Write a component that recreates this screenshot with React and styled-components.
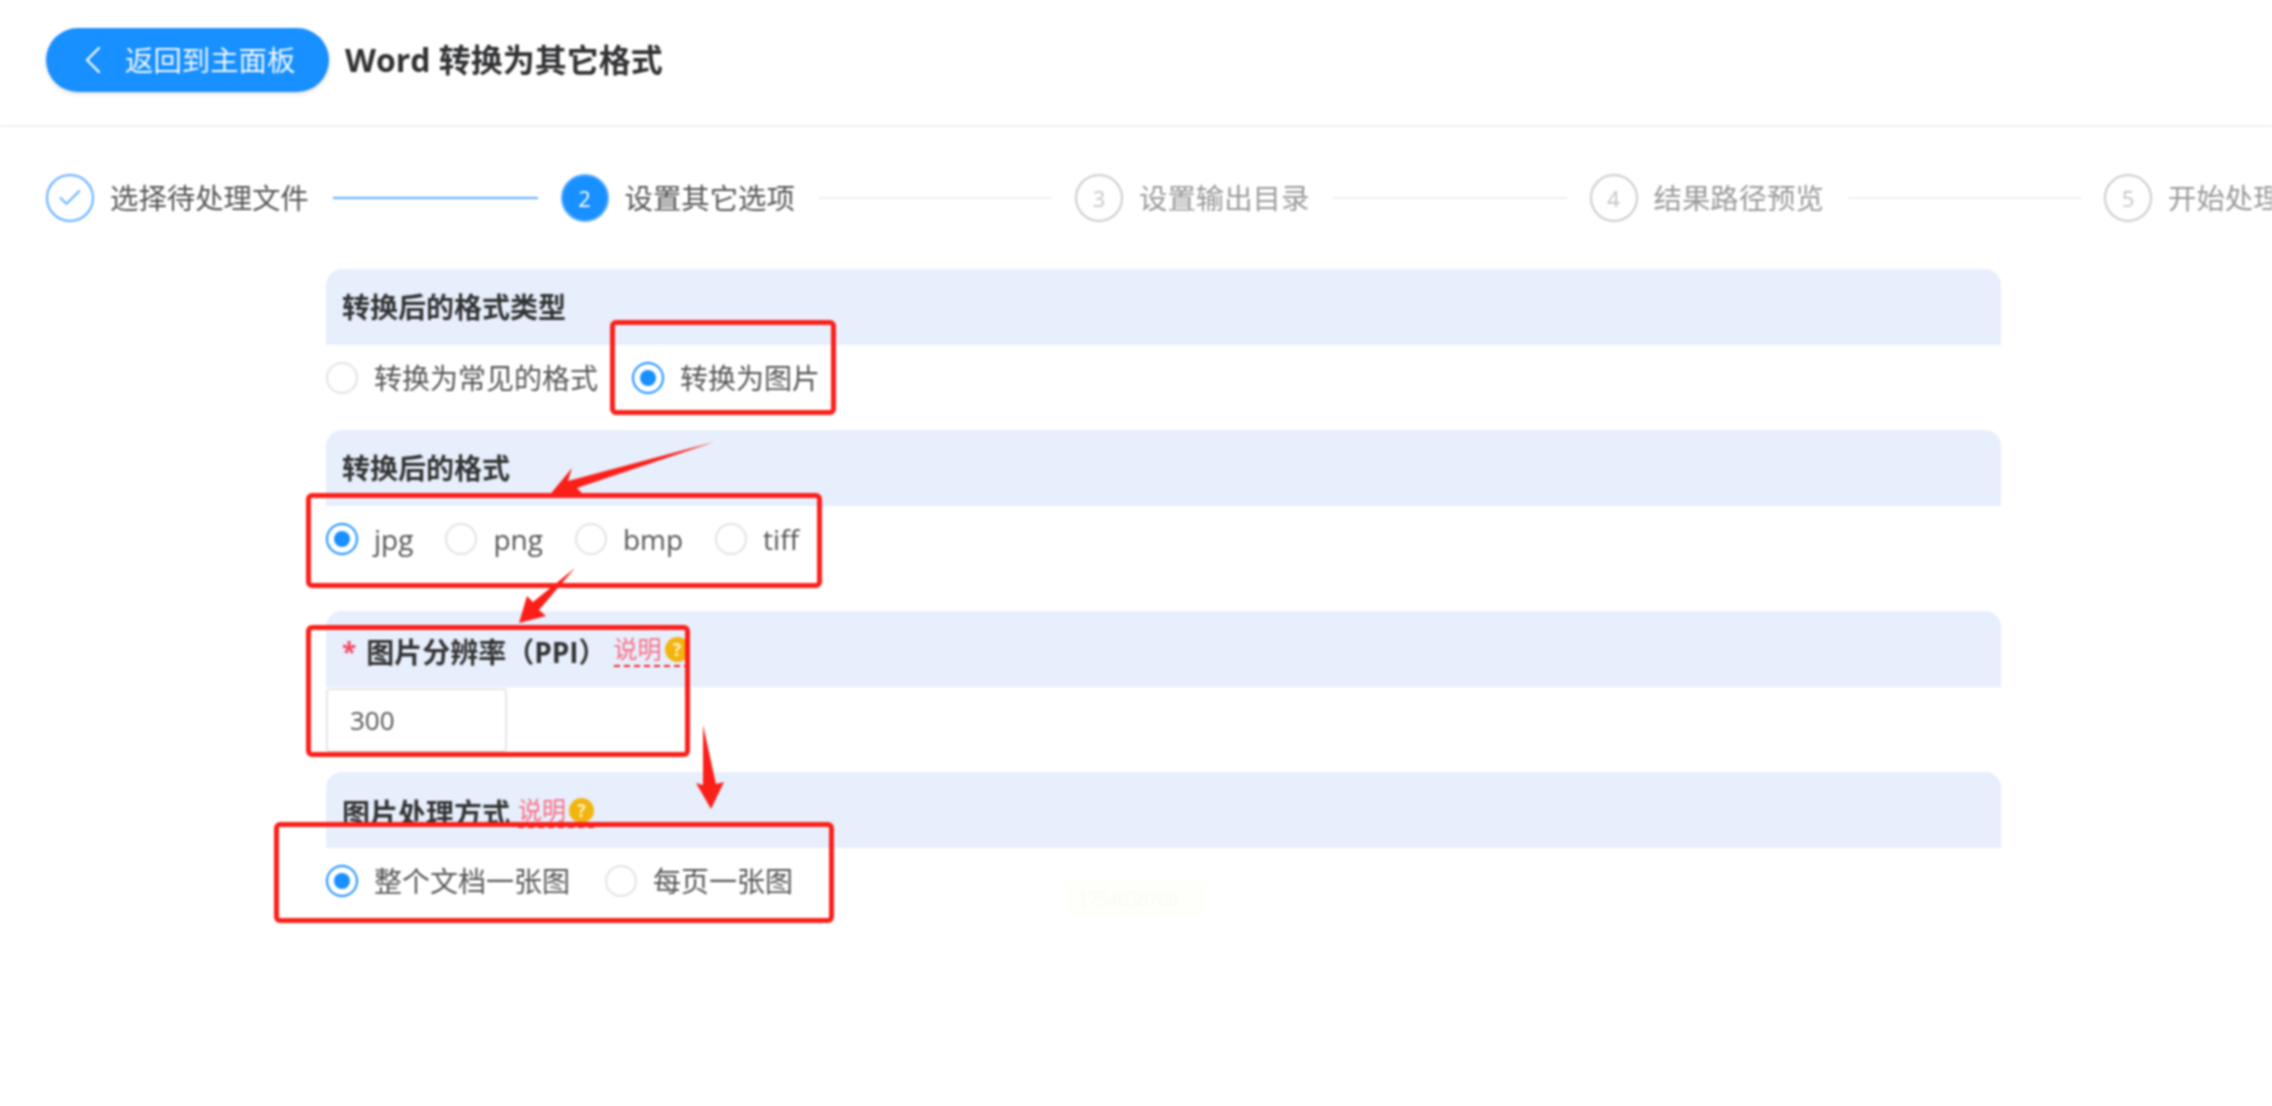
import React from 'react'
import styled, { createGlobalStyle } from 'styled-components'
import { Check, ChevronLeft } from 'lucide-react'

const GlobalStyle = createGlobalStyle`
  html, body {
    margin: 0;
    padding: 0;
    background: #fff;
  }

  body {
    font-family: "Open Sans", "Noto Sans CJK SC", sans-serif;
    color: #444;
    overflow: hidden;
  }
`

const Page = styled.div`
  position: relative;
  width: 2272px;
  height: 1106px;
  overflow: hidden;
  background: #fff;
  filter: blur(0.8px);
`

const Header = styled.header`
  display: flex;
  align-items: center;
  gap: 16px;
  height: 127px;
  padding: 0 46px 5px;
  box-sizing: border-box;
  border-bottom: 2px solid #f0f0f0;
`

const BackButton = styled.button`
  display: flex;
  align-items: center;
  width: 283px;
  height: 64px;
  padding: 0 0 0 23px;
  border: none;
  border-radius: 32px;
  background: #1890ff;
  box-shadow: 0 2px 4px rgba(0, 0, 0, 0.12);
  color: #f2f8ff;
  font: inherit;
  font-size: 28.4px;
  line-height: 1;

  svg {
    margin-right: 8px;
    flex: none;
  }
`

const Title = styled.h1`
  margin: 0;
  color: #303133;
  font-size: 32px;
  font-weight: 700;
  line-height: 1;
`

const Steps = styled.ol`
  display: flex;
  align-items: center;
  width: 2600px;
  margin: 0;
  padding: 47px 0 0 46px;
  list-style: none;
`

const Step = styled.li`
  display: flex;
  flex: none;
  align-items: center;
  width: 514.5px;
  padding-right: 23px;
  box-sizing: border-box;
`

const StepCircle = styled.span`
  display: flex;
  flex: none;
  align-items: center;
  justify-content: center;
  width: 48px;
  height: 48px;
  box-sizing: border-box;
  border: 2px solid ${(p) => (p.$state === 'wait' ? '#ccc' : '#5eaeff')};
  border-radius: 50%;
  background: ${(p) => (p.$state === 'active' ? '#1890ff' : '#fff')};
  color: ${(p) => (p.$state === 'active' ? '#fff' : p.$state === 'wait' ? '#c4c4c4' : '#5eaeff')};
  font-size: 22px;
`

const StepLabel = styled.span`
  flex: none;
  margin: 0 24px 0 16px;
  color: ${(p) => (p.$state === 'wait' ? '#999' : '#555')};
  font-size: 28.4px;
  line-height: 1;
`

const StepLine = styled.span`
  flex: 1;
  height: 2px;
  background: ${(p) => (p.$done ? '#5eaeff' : '#efefef')};
`

const Form = styled.main`
  width: 1675px;
  margin: 47px 0 0 326px;
`

const Section = styled.section`
  display: flex;
  flex-direction: column;
`

const SectionHead = styled.div`
  display: flex;
  align-items: center;
  height: 76px;
  padding: ${(p) => (p.$low ? '5px' : '0')} 16px 0;
  box-sizing: border-box;
  border-radius: 16px 16px 0 0;
  background: #e7eefc;
  color: #333;
  font-size: 28px;
  font-weight: 700;
  line-height: 1;
`

const Required = styled.span`
  margin-right: 10px;
  color: #f5455c;
  font-size: 26px;
`

const Hint = styled.span`
  display: inline-flex;
  align-items: center;
  gap: 3px;
  margin-left: ${(p) => p.$offset}px;
  padding-bottom: 3px;
  border-bottom: 2px dashed #f5222d;
  color: #f86d82;
  font-size: 24px;
  font-weight: 400;
`

const HintBadge = styled.span`
  display: flex;
  align-items: center;
  justify-content: center;
  width: 25px;
  height: 25px;
  border-radius: 50%;
  background: #f2b50f;
  color: #fff3c4;
  font-size: 17px;
  font-weight: 700;
`

const RadioRow = styled.div`
  display: flex;
  align-items: center;
  gap: ${(p) => p.$gap}px;
  height: ${(p) => p.$height}px;
  padding-bottom: ${(p) => p.$pad}px;
  box-sizing: border-box;
`

const RadioItem = styled.label`
  display: flex;
  align-items: center;
  gap: 16px;
  color: #555;
  font-size: 28px;
  line-height: 1;
`

const RadioMark = styled.span`
  display: flex;
  flex: none;
  align-items: center;
  justify-content: center;
  width: 32px;
  height: 32px;
  box-sizing: border-box;
  border: 2px solid ${(p) => (p.$on ? '#1890ff' : '#e2e2e2')};
  border-radius: 50%;
  background: #fff;

  &::after {
    content: '';
    display: ${(p) => (p.$on ? 'block' : 'none')};
    width: 16px;
    height: 16px;
    border-radius: 50%;
    background: #1890ff;
  }
`

const InputRow = styled.div`
  height: 85px;
  padding-top: 1px;
  box-sizing: border-box;
`

const NumberInput = styled.div`
  display: flex;
  align-items: center;
  width: 181px;
  height: 64px;
  padding-left: 22px;
  box-sizing: border-box;
  border: 2px solid #e6e6e6;
  border-radius: 4px;
  color: #555;
  font-size: 26px;
`

const Mark = styled.div`
  position: absolute;
  left: ${(p) => p.$x}px;
  top: ${(p) => p.$y}px;
  width: ${(p) => p.$w}px;
  height: ${(p) => p.$h}px;
  box-sizing: border-box;
  border: 5px solid #fb1f1a;
  border-radius: 6px;
`

const Arrows = styled.svg`
  position: absolute;
  left: 0;
  top: 0;
  pointer-events: none;
`

const Watermark = styled.div`
  position: absolute;
  left: 1067px;
  top: 881px;
  width: 138px;
  height: 36px;
  padding-left: 11px;
  box-sizing: border-box;
  background: #fefefa;
  color: #fafaf3;
  font-family: "Liberation Serif", serif;
  font-size: 20px;
  line-height: 36px;
`

const stepList = [
  { label: '选择待处理文件', state: 'done' },
  { label: '设置其它选项', state: 'active', num: 2 },
  { label: '设置输出目录', state: 'wait', num: 3 },
  { label: '结果路径预览', state: 'wait', num: 4 },
  { label: '开始处理', state: 'wait', num: 5 },
]

const marks = [
  { x: 610, y: 320, w: 226, h: 95 },
  { x: 306, y: 493, w: 516, h: 95 },
  { x: 306, y: 625, w: 384, h: 132 },
  { x: 274, y: 822, w: 560, h: 101 },
]

function Radio({ on, children }) {
  return (
    <RadioItem>
      <RadioMark $on={on} />
      {children}
    </RadioItem>
  )
}

function HintLink({ offset }) {
  return (
    <Hint $offset={offset}>
      说明
      <HintBadge>?</HintBadge>
    </Hint>
  )
}

function App() {
  return (
    <Page>
      <GlobalStyle />
      <Header>
        <BackButton type="button">
          <ChevronLeft size={48} strokeWidth={1.2} />
          返回到主面板
        </BackButton>
        <Title>Word 转换为其它格式</Title>
      </Header>

      <Steps>
        {stepList.map((step, i) => (
          <Step key={step.label}>
            <StepCircle $state={step.state}>
              {step.state === 'done' ? <Check size={28} strokeWidth={1.6} /> : step.num}
            </StepCircle>
            <StepLabel $state={step.state}>{step.label}</StepLabel>
            {i < stepList.length - 1 && <StepLine $done={step.state === 'done'} />}
          </Step>
        ))}
      </Steps>

      <Form>
        <Section>
          <SectionHead>转换后的格式类型</SectionHead>
          <RadioRow $gap={34} $height={85} $pad={19}>
            <Radio>转换为常见的格式</Radio>
            <Radio on>转换为图片</Radio>
          </RadioRow>
        </Section>
        <Section>
          <SectionHead>转换后的格式</SectionHead>
          <RadioRow $gap={32} $height={105} $pad={39}>
            <Radio on>jpg</Radio>
            <Radio>png</Radio>
            <Radio>bmp</Radio>
            <Radio>tiff</Radio>
          </RadioRow>
        </Section>
        <Section>
          <SectionHead $low>
            <Required>*</Required>
            图片分辨率（PPI）
            <HintLink offset={7} />
          </SectionHead>
          <InputRow>
            <NumberInput>300</NumberInput>
          </InputRow>
        </Section>
        <Section>
          <SectionHead $low>
            图片处理方式
            <HintLink offset={8} />
          </SectionHead>
          <RadioRow $gap={35} $height={66}>
            <Radio on>整个文档一张图</Radio>
            <Radio>每页一张图</Radio>
          </RadioRow>
        </Section>
      </Form>

      <Watermark>1754638766</Watermark>

      {marks.map((m) => (
        <Mark key={m.y} $x={m.x} $y={m.y} $w={m.w} $h={m.h} />
      ))}

      <Arrows width="2272" height="1106" viewBox="0 0 2272 1106">
        <path d="M714 442 L568 481 L572 468 L548 497 L586 497 L577 488 Z" fill="#fb1f1a" />
        <path d="M575 568 L533 602 L527 596 L519 623 L546 616 L539 610 Z" fill="#fb1f1a" />
        <path d="M703 725 L703 785 L696 783 L711 809 L724 782 L716 784 Z" fill="#fb1f1a" />
      </Arrows>
    </Page>
  )
}

export default App
